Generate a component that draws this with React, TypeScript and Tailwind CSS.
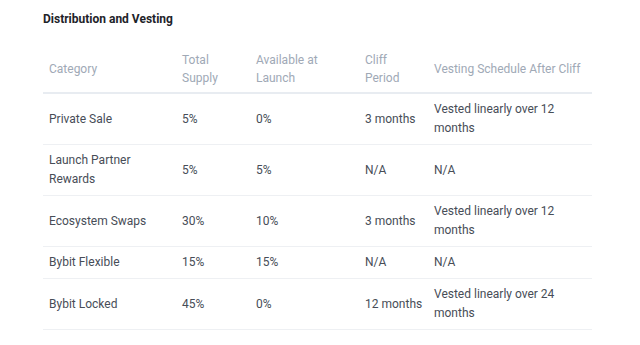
const rows = [
  { cat: 'Private Sale', total: '5%', avail: '0%', cliff: '3 months', vest: 'Vested linearly over 12 months' },
  { cat: 'Launch Partner Rewards', total: '5%', avail: '5%', cliff: 'N/A', vest: 'N/A' },
  { cat: 'Ecosystem Swaps', total: '30%', avail: '10%', cliff: '3 months', vest: 'Vested linearly over 12 months' },
  { cat: 'Bybit Flexible', total: '15%', avail: '15%', cliff: 'N/A', vest: 'N/A' },
  { cat: 'Bybit Locked', total: '45%', avail: '0%', cliff: '12 months', vest: 'Vested linearly over 24 months' },
];

export default function App() {
  return (
    <div className="w-[640px] h-[345px] bg-white pl-[43px] pt-[11px] font-['Roboto',sans-serif]">
      <h3 className="text-[12px] leading-[16px] font-bold text-[#1e2329]">Distribution and Vesting</h3>

      <table className="mt-[17px] w-[549px] table-fixed border-collapse text-[12px]">
        <colgroup>
          <col className="w-[133px]" />
          <col className="w-[74px]" />
          <col className="w-[109px]" />
          <col className="w-[69px]" />
          <col className="w-[164px]" />
        </colgroup>
        <thead>
          <tr className="border-b-2 border-[#e8ecf1] text-left text-[#a0a9b6] leading-[17.5px]">
            <th className="px-[6px] pt-[8px] pb-[5px] font-normal">Category</th>
            <th className="px-[6px] pt-[8px] pb-[5px] font-normal">Total Supply</th>
            <th className="px-[6px] pt-[8px] pb-[5px] font-normal">Available at Launch</th>
            <th className="px-[6px] pt-[8px] pb-[5px] font-normal">Cliff Period</th>
            <th className="px-[6px] pt-[8px] pb-[5px] font-normal">Vesting Schedule After Cliff</th>
          </tr>
        </thead>
        <tbody className="text-[#474d57] leading-[19px]">
          {rows.map((r) => (
            <tr key={r.cat} className="border-b border-[#eef0f3]">
              <td className="px-[6px] py-[6px]">{r.cat}</td>
              <td className="px-[6px] py-[6px]">{r.total}</td>
              <td className="px-[6px] py-[6px]">{r.avail}</td>
              <td className="pl-[6px] pr-0 py-[6px] whitespace-nowrap">{r.cliff}</td>
              <td className="px-[6px] py-[6px]">{r.vest}</td>
            </tr>
          ))}
        </tbody>
      </table>
    </div>
  );
}
